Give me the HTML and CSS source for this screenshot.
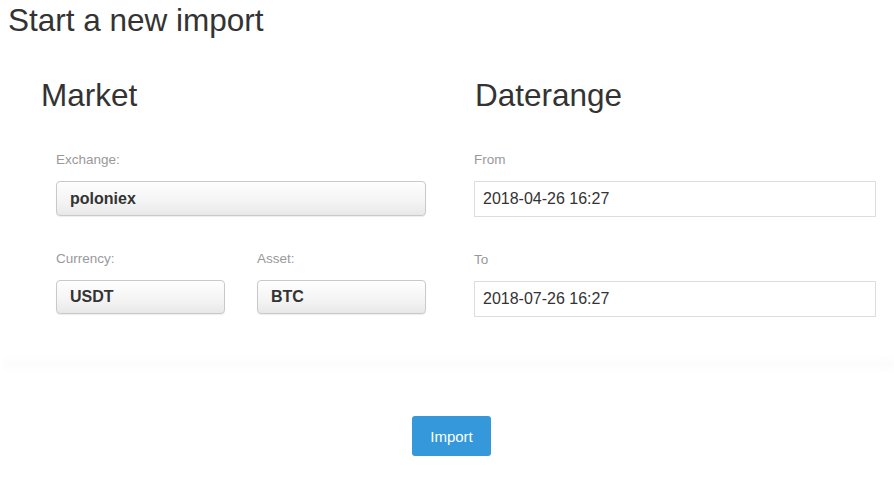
FILE: index.html
```html
<!DOCTYPE html>
<html>
<head>
    <title>Import</title>
    <link rel="stylesheet" href="styles.css">
</head>
<body>
    <h2 class="page-title">Start a new import</h2>

    <div class="import-form">
        <div class="market">
            <h3>Market</h3>
            <div class="fields">
                <div class="form-group">
                    <label>Exchange:</label>
                    <div class="select">poloniex</div>
                </div>
                <div class="pair">
                    <div class="form-group">
                        <label>Currency:</label>
                        <div class="select">USDT</div>
                    </div>
                    <div class="form-group">
                        <label>Asset:</label>
                        <div class="select">BTC</div>
                    </div>
                </div>
            </div>
        </div>

        <div class="daterange">
            <h3>Daterange</h3>
            <div class="form-group">
                <label>From</label>
                <input type="text" value="2018-04-26 16:27">
            </div>
            <div class="form-group">
                <label>To</label>
                <input type="text" value="2018-07-26 16:27">
            </div>
        </div>
    </div>

    <div class="divider"></div>

    <div class="actions">
        <button class="btn-import">Import</button>
    </div>
</body>
</html>
```

FILE: styles.css
```css
body {
    margin: 0;
    font-family: "Liberation Sans", Arial, sans-serif;
    color: #333;
    background: #fff;
}

.page-title {
    margin: 2px 0 0 8px;
    font-size: 31.5px;
    line-height: 36px;
    font-weight: normal;
}

h3 {
    margin: 0;
    font-size: 31.5px;
    line-height: 36px;
    font-weight: normal;
}

.import-form {
    display: grid;
    grid-template-columns: 433px 402px;
    padding-left: 41px;
    margin-top: 39px;
}

.fields {
    padding-left: 15px;
    width: 370px;
}

.pair {
    display: flex;
    gap: 32px;
}

.pair .form-group {
    flex: 1;
}

.form-group {
    margin-top: 38px;
}

.form-group + .form-group,
.pair {
    margin-top: 34px;
}

.pair .form-group {
    margin-top: 0;
}

label {
    display: block;
    font-size: 13.5px;
    line-height: 18px;
    color: #999;
    margin-bottom: 12px;
}

.select {
    box-sizing: border-box;
    height: 35px;
    padding: 0 13px;
    line-height: 33px;
    font-size: 16px;
    font-weight: bold;
    color: #333;
    border: 1px solid #c9c9c9;
    border-radius: 4px;
    background: linear-gradient(to bottom, #fefefe, #f4f4f4 60%, #e8e8e8);
    box-shadow: 0 1px 1px rgba(0,0,0,0.07);
}

.pair .select {
    height: 34px;
    line-height: 32px;
}

.daterange h3 {
    margin-left: 1px;
}

input {
    display: block;
    box-sizing: border-box;
    width: 402px;
    height: 36px;
    padding: 0 8px;
    font-family: "Liberation Sans", Arial, sans-serif;
    font-size: 16px;
    color: #333;
    border: 1px solid #ddd;
    background: #fff;
    outline: none;
}

.divider {
    margin: 46px 0 0 6px;
    height: 2px;
    box-shadow: 0 0 10px 3px rgba(0,0,0,0.025);
    background: rgba(0,0,0,0.012);
}

.actions {
    display: flex;
    justify-content: center;
    padding-top: 51px;
}

.btn-import {
    width: 79px;
    height: 40px;
    margin-left: 9px;
    border: none;
    border-radius: 3px;
    background: #3498db;
    color: #fff;
    font-family: "Liberation Sans", Arial, sans-serif;
    font-size: 15px;
    cursor: pointer;
}
```
